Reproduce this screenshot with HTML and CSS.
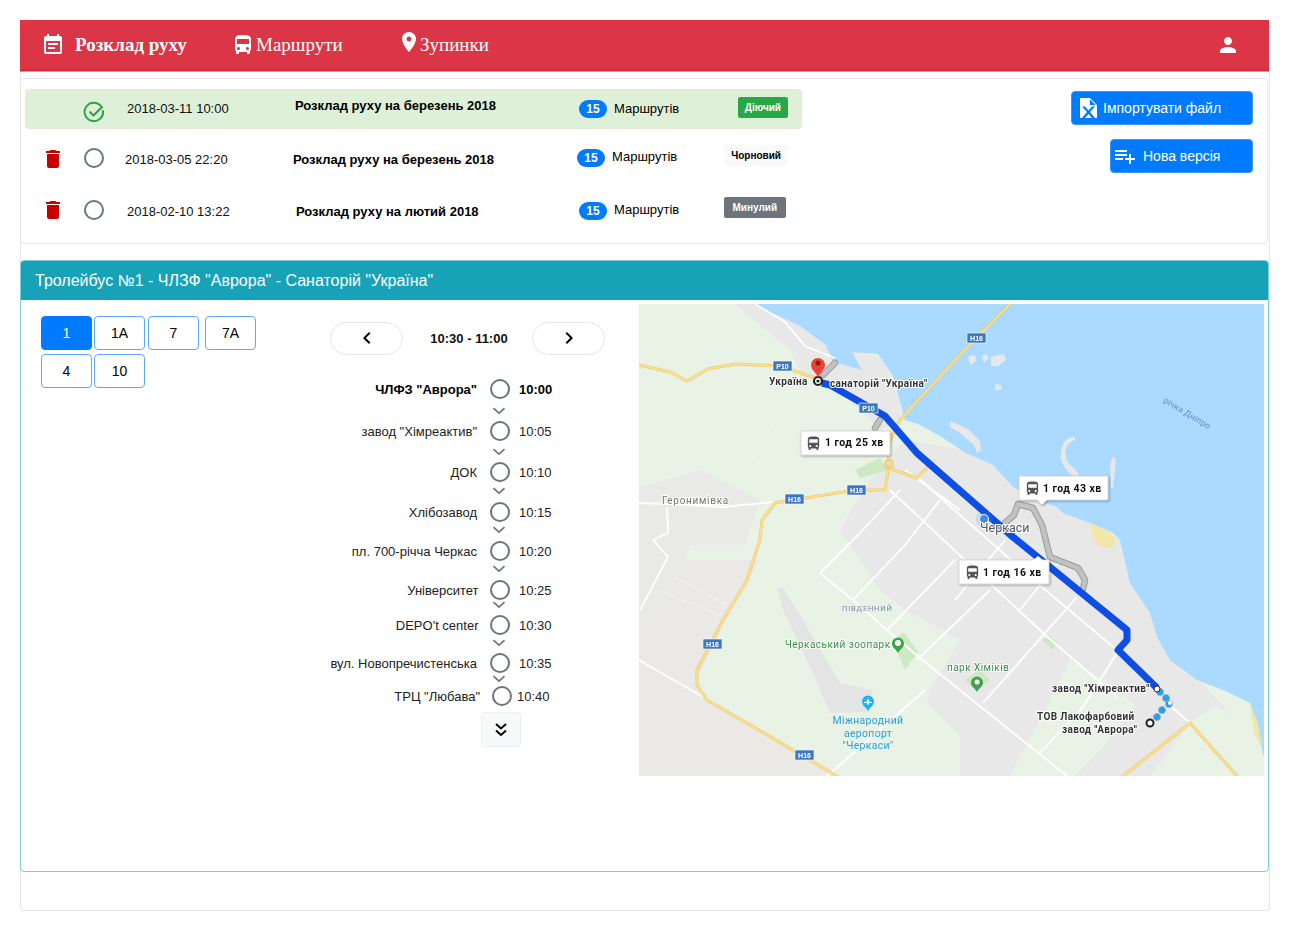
FILE: index.html
```html
<!DOCTYPE html>
<html lang="uk">
<head>
<meta charset="utf-8">
<title>Розклад руху</title>
<link rel="stylesheet" href="styles.css">
</head>
<body>
<svg class="defs" width="0" height="0" aria-hidden="true">
  <symbol id="i-event" viewBox="0 0 24 24"><path d="M17 10H7v2h10v-2zm2-7h-1V1h-2v2H8V1H6v2H5c-1.11 0-1.99.9-1.99 2L3 19c0 1.1.89 2 2 2h14c1.1 0 2-.9 2-2V5c0-1.1-.9-2-2-2zm0 16H5V8h14v11zm-5-5H7v2h7v-2z"/></symbol>
  <symbol id="i-bus" viewBox="0 0 24 24"><path d="M4 16c0 .88.39 1.67 1 2.22V20c0 .55.45 1 1 1h1c.55 0 1-.45 1-1v-1h8v1c0 .55.45 1 1 1h1c.55 0 1-.45 1-1v-1.78c.61-.55 1-1.34 1-2.22V6c0-3.5-3.58-4-8-4s-8 .5-8 4v10zm3.5 1c-.83 0-1.5-.67-1.5-1.5S6.67 14 7.5 14s1.5.67 1.5 1.5S8.33 17 7.5 17zm9 0c-.83 0-1.5-.67-1.5-1.5s.67-1.5 1.5-1.5 1.5.67 1.5 1.5-.67 1.5-1.5 1.5zm1.5-6H6V6h12v5z"/></symbol>
  <symbol id="i-place" viewBox="0 0 24 24"><path d="M12 2C8.13 2 5 5.13 5 9c0 5.25 7 13 7 13s7-7.75 7-13c0-3.87-3.13-7-7-7zm0 9.5c-1.38 0-2.5-1.12-2.5-2.5s1.12-2.5 2.5-2.5 2.5 1.12 2.5 2.5-1.12 2.5-2.5 2.5z"/></symbol>
  <symbol id="i-person" viewBox="0 0 24 24"><path d="M12 12c2.21 0 4-1.79 4-4s-1.79-4-4-4-4 1.79-4 4 1.79 4 4 4zm0 2c-2.67 0-8 1.34-8 4v2h16v-2c0-2.66-5.33-4-8-4z"/></symbol>
  <symbol id="i-delete" viewBox="0 0 24 24"><path d="M6 19c0 1.1.9 2 2 2h8c1.1 0 2-.9 2-2V7H6v12zM19 4h-3.5l-1-1h-5l-1 1H5v2h14V4z"/></symbol>
  <symbol id="i-radio" viewBox="0 0 24 24"><circle cx="12" cy="12" r="9" fill="none" stroke="currentColor" stroke-width="2"/></symbol>
  <symbol id="i-check" viewBox="0 0 24 24"><path d="M19.5 6.8A9.2 9.2 0 1 0 21 11" fill="none" stroke="currentColor" stroke-width="2" stroke-linecap="round"/><path d="M7.5 11.5l4 4 9-9" fill="none" stroke="currentColor" stroke-width="2"/></symbol>
  <symbol id="i-chev" viewBox="0 0 14 8"><path d="M1.500 1.200l5.500 5 5.500-5" fill="none" stroke="currentColor" stroke-width="1.700"/></symbol>
</svg>

<div class="page">
  <nav class="navbar">
    <a class="nav-item nav-active"><svg class="nav-icon"><use href="#i-event"/></svg><span>Розклад руху</span></a>
    <a class="nav-item nav-routes"><svg class="nav-icon"><use href="#i-bus"/></svg><span>Маршрути</span></a>
    <a class="nav-item nav-stops"><svg class="nav-icon pin"><use href="#i-place"/></svg><span>Зупинки</span></a>
    <svg class="nav-icon nav-user"><use href="#i-person"/></svg>
  </nav>

  <section class="versions">
    <div class="version-list">
      <div class="version v-active">
        <span class="c-del"></span>
        <svg class="c-state state-ok"><use href="#i-check"/></svg>
        <span class="c-date">2018-03-11 10:00</span>
        <strong class="c-title">Розклад руху на березень 2018</strong>
        <span class="c-count">15</span>
        <span class="c-unit">Маршрутів</span>
        <span class="c-status st-green">Діючий</span>
      </div>
      <div class="version v-draft">
        <svg class="c-del"><use href="#i-delete"/></svg>
        <svg class="c-state"><use href="#i-radio"/></svg>
        <span class="c-date">2018-03-05 22:20</span>
        <strong class="c-title">Розклад руху на березень 2018</strong>
        <span class="c-count">15</span>
        <span class="c-unit">Маршрутів</span>
        <span class="c-status st-light">Чорновий</span>
      </div>
      <div class="version v-past">
        <svg class="c-del"><use href="#i-delete"/></svg>
        <svg class="c-state"><use href="#i-radio"/></svg>
        <span class="c-date">2018-02-10 13:22</span>
        <strong class="c-title">Розклад руху на лютий 2018</strong>
        <span class="c-count">15</span>
        <span class="c-unit">Маршрутів</span>
        <span class="c-status st-grey">Минулий</span>
      </div>
    </div>
    <div class="actions">
      <button class="btn-primary btn-import">
        <svg class="btn-icon" viewBox="0 0 24 24"><path fill-rule="evenodd" d="M4 2h10l7 7v13H4zM14 3.500V9h5.500zM6 10.500h3l3.500 4 3.500-4h3l-5 5.500 5 6h-3l-3.500-4-3.500 4H6l5-6z"/></svg>
        <span>Імпортувати файл</span>
      </button>
      <button class="btn-primary btn-new">
        <svg class="btn-icon" viewBox="0 0 24 24"><path d="M14 10H2v2h12v-2zm0-4H2v2h12V6zm4 8v-4h-2v4h-4v2h4v4h2v-4h4v-2h-4zM2 16h8v-2H2v2z"/></svg>
        <span>Нова версія</span>
      </button>
    </div>
  </section>

  <section class="route-card">
    <header class="route-head">Тролейбус №1 - ЧЛЗФ "Аврора" - Санаторій "Україна"</header>
    <div class="route-body">
      <div class="route-picker">
        <button class="pick pick-on">1</button>
        <button class="pick">1A</button>
        <button class="pick pick-n7">7</button>
        <button class="pick pick-n7a">7A</button>
        <button class="pick">4</button>
        <button class="pick">10</button>
      </div>

      <div class="schedule">
        <div class="slot-bar">
          <button class="pill"><svg width="24" height="24" viewBox="0 0 24 24"><path d="M15.400 7.400L14 6l-6 6 6 6 1.400-1.400L10.800 12z"/></svg></button>
          <b class="slot">10:30 - 11:00</b>
          <button class="pill"><svg width="24" height="24" viewBox="0 0 24 24"><path d="M8.600 7.400L10 6l6 6-6 6-1.400-1.400L13.200 12z"/></svg></button>
        </div>
        <div class="stops">
          <div class="stop stop-main"><span class="s-name">ЧЛФЗ "Аврора"</span><svg class="s-dot"><use href="#i-radio"/></svg><span class="s-time">10:00</span></div>
          <div class="link d22 n20"><svg class="chev"><use href="#i-chev"/></svg></div>
          <div class="stop"><span class="s-name">завод "Хімреактив"</span><svg class="s-dot"><use href="#i-radio"/></svg><span class="s-time">10:05</span></div>
          <div class="link d21 n20"><svg class="chev"><use href="#i-chev"/></svg></div>
          <div class="stop"><span class="s-name">ДОК</span><svg class="s-dot"><use href="#i-radio"/></svg><span class="s-time">10:10</span></div>
          <div class="link d19 n21"><svg class="chev"><use href="#i-chev"/></svg></div>
          <div class="stop"><span class="s-name">Хлібозавод</span><svg class="s-dot"><use href="#i-radio"/></svg><span class="s-time">10:15</span></div>
          <div class="link d18 n21"><svg class="chev"><use href="#i-chev"/></svg></div>
          <div class="stop"><span class="s-name">пл. 700-річча Черкас</span><svg class="s-dot"><use href="#i-radio"/></svg><span class="s-time">10:20</span></div>
          <div class="link d18 n21"><svg class="chev"><use href="#i-chev"/></svg></div>
          <div class="stop stop-wide"><span class="s-name">Університет</span><svg class="s-dot"><use href="#i-radio"/></svg><span class="s-time">10:25</span></div>
          <div class="link d15 n20"><svg class="chev"><use href="#i-chev"/></svg></div>
          <div class="stop stop-wide"><span class="s-name">DEPO't center</span><svg class="s-dot"><use href="#i-radio"/></svg><span class="s-time">10:30</span></div>
          <div class="link d18 n20"><svg class="chev"><use href="#i-chev"/></svg></div>
          <div class="stop"><span class="s-name">вул. Новопречистенська</span><svg class="s-dot"><use href="#i-radio"/></svg><span class="s-time">10:35</span></div>
          <div class="link d16 n17"><svg class="chev"><use href="#i-chev"/></svg></div>
          <div class="stop stop-last"><span class="s-name">ТРЦ "Любава"</span><svg class="s-dot"><use href="#i-radio"/></svg><span class="s-time">10:40</span></div>
        </div>
        <button class="more"><svg width="18" height="18" viewBox="0 0 18 18"><path d="M4 3l5 4.500L14 3M4 9.500l5 4.500 5-4.500" fill="none" stroke="#000" stroke-width="2"/></svg></button>
      </div>

      <svg class="map" viewBox="639 304 625 472" preserveAspectRatio="none">
        <defs>
          <filter id="soft" x="-5%" y="-5%" width="110%" height="110%"><feGaussianBlur stdDeviation="0.4"/></filter>
          <filter id="drop" x="-10%" y="-10%" width="125%" height="130%"><feDropShadow dx="1" dy="1" stdDeviation="1" flood-color="#000" flood-opacity=".35"/></filter>
        </defs>
        <g filter="url(#soft)">
          <rect x="639" y="304" width="625" height="472" fill="#e8f3e6"/>
          <!-- built-up land -->
          <path fill="#ebe9e5" d="M639 560L760 560 747 585 723 625 697 680 707 700 793 750 837 776 639 776z"/>
          <path fill="#e9e9e8" d="M639 488L700 470 760 500 745 545 690 545 672 600 639 640z"/>
          <path fill="#e8e8e8" d="M735 304L800 304 840 345 885 360 905 420 880 430 845 395 825 385 800 370 790 350z"/>
          <path fill="#e8e8e8" d="M870 480L905 440 990 455 1040 495 1120 540 1180 660 1264 750 1264 776 905 776 930 690 960 640 905 610 880 590 840 530z"/>
          <path fill="#e4e4e4" d="M777 588L783 588 803 620 840 683 873 690 870 712 830 713 813 673 783 610z"/>
          <path fill="#e8f3e6" d="M1070 660L1105 680 1135 705 1105 745 1075 776 1010 776 1040 720zM1150 776L1190 723 1215 705 1255 730 1264 757 1264 776zM880 776L905 735 925 700 960 735 960 776z"/>
          <path fill="#cfe8c4" d="M892 640L904 632 918 652 905 670zM965 680L975 690 990 680 980 670zM1042 640L1052 650 1058 643 1048 635zM855 470L880 458 888 470 860 478z"/>
          <!-- water -->
          <path fill="#aadaff" d="M753 304L800 326 826 345 833 362 862 370 852 352 878 354 893 376 905 420 918 424 940 436 964 452 993 465 1013 487 1037 500 1057 507 1063 513 1090 523 1113 533 1120 540 1130 583 1150 613 1157 637 1170 660 1197 680 1223 690 1250 703 1264 757 1264 304z"/>
          <path fill="#e8e8e8" d="M1066 440c5-4 11-4 9 0-8 3-12 10-8 20 3 7 9 8 12 15l-6 1c-8-6-14-16-12-24 1-5 2-9 5-12zM1112 458c4-2 4 4 3 12l-2 18-2 0c0-10-2-22 1-30zM968 356l7-1 1 6-6 4zM982 356l4-2 3 4-5 5zM991 357l13-3 2 6-8 6-7 0zM995 384l6 1 1 4-6 2zM950 421l18 8 12 12 1 9-4 3-3-8-14-12-10-6z"/>
          <path fill="#f3e7a8" d="M1090 523l18 8 9 9-4 8-12-1-9-10zM1250 703l8 20 4 25-8-15z"/>
          <!-- streets -->
          <g fill="none" stroke="#fff" stroke-width="1.800">
            <path d="M755 304l30 18 20 24 30 12"/>
            <path d="M820 573L853 600 887 630 920 658 1067 776M820 573L860 533M853 600L905 545M887 630L955 560M917 660L990 590M983 703L1077 597M827 776L925 690"/>
            <path d="M917 477L1037 583 1117 650M890 490L1043 633 1117 697M1040 753L1083 707 1117 653M1167 703L1190 723M885 430L889 464M905 470L960 510M860 533L900 490M940 500L905 545M1005 540L955 600M1060 560L1020 610"/>
            <path d="M639 503L690 505 723 507 773 502M667 507L668 533 653 540 668 557 640 610M639 660L703 697"/>
          </g>
          <g fill="none" stroke="#f2f6f0" stroke-width="1">
            <path d="M675 577l50 27-5 12-30-14M660 590l30 14M790 393L753 460"/>
          </g>
          <!-- yellow roads -->
          <g fill="none" stroke-linecap="round" stroke-linejoin="round">
            <path stroke="#eec96a" stroke-width="3" d="M639 365L670 372 687 381 708 369 735 364 780 366 815 378M1010 304L960 355 900 420 888 445 889 463 885 490 855 490 775 503 762 520 760 540 747 580 723 620 697 670 697 685 707 700 793 750 837 776M889 468L917 478 928 466M1123 776L1190 723 1237 776"/>
            <path stroke="#fde293" stroke-width="1.600" d="M639 365L670 372 687 381 708 369 735 364 780 366 815 378M1010 304L960 355 900 420 888 445 889 463 885 490 855 490 775 503 762 520 760 540 747 580 723 620 697 670 697 685 707 700 793 750 837 776M889 468L917 478 928 466M1123 776L1190 723 1237 776"/>
          </g>
          <circle cx="889" cy="464" r="4" fill="none" stroke="#f0cc70" stroke-width="2"/>
          <!-- grey alternatives -->
          <g fill="none" stroke-linecap="round" stroke-linejoin="round">
            <path stroke="#9a9a9a" stroke-width="6.500" d="M835 363L823 375M880 420L875 428M1005 523L1014 515 1018 504 1033 508 1042 525 1050 557 1078 568 1085 580 1083 589"/>
            <path stroke="#c2c2c2" stroke-width="4.500" d="M835 363L823 375M880 420L875 428M1005 523L1014 515 1018 504 1033 508 1042 525 1050 557 1078 568 1085 580 1083 589"/>
          </g>
          <!-- main route -->
          <path fill="none" stroke="#0b4fe4" stroke-width="7" stroke-linejoin="round" d="M822 383L830 385 885 416 917 453 1013 537 1127 630 1127 640 1118 650 1157 688"/>
          <g fill="#1aa3f5" stroke="#9aa7ad" stroke-width=".800"><circle cx="1160" cy="692" r="3.500"/><circle cx="1166" cy="698" r="3.500"/><circle cx="1169" cy="704" r="3.500"/><circle cx="1162" cy="710" r="3.500"/><circle cx="1157" cy="717" r="3.500"/></g>
          <circle cx="1157" cy="689" r="3" fill="#fff" stroke="#222" stroke-width="1"/>
          <circle cx="1170" cy="703" r="2" fill="#fff"/>
          <circle cx="1150" cy="723" r="3.500" fill="#fff" stroke="#222" stroke-width="2"/>
          <circle cx="818" cy="381" r="4" fill="#fff" stroke="#222" stroke-width="2.200"/>
          <circle cx="818" cy="381" r="1.600" fill="#222"/>
          <!-- pin -->
          <path fill="#ea4335" d="M818 378c-1-5-7-8-7-13a7 7 0 0 1 14 0c0 5-6 8-7 13z"/>
          <circle cx="818" cy="363" r="2.500" fill="#8e1c14"/>
          <!-- location dot -->
          <circle cx="984" cy="519" r="8" fill="#4285f4" opacity=".18"/>
          <circle cx="984" cy="519" r="4.500" fill="#4285f4" stroke="#fff"/>
          <!-- POI pins -->
          <path fill="#3fa24c" d="M898 653c-1-3-6-5-6-9.500a6 6 0 0 1 12 0c0 4.500-5 6.500-6 9.500z"/>
          <circle cx="898" cy="643" r="3" fill="#fff"/>
          <path fill="#3fa24c" d="M977 692c-1-3-6-5-6-9.500a6 6 0 0 1 12 0c0 4.500-5 6.500-6 9.500z"/>
          <circle cx="977" cy="682" r="2.500" fill="#fff"/>
          <path fill="#1cb4f0" d="M868 711c-1-3-6-5-6-9.500a6 6 0 0 1 12 0c0 4.500-5 6.500-6 9.500z"/>
          <path fill="#fff" d="M864 702l3-.5 1-3h.8l.2 3 3 .5v1l-3-.3-.2 2-1 0-.8-2-3 .3z"/>
          <!-- road shields -->
          <g fill="#3b78c4" stroke="#fff" stroke-width=".600">
            <rect x="773" y="361" width="19" height="10"/><rect x="859" y="403" width="19" height="10"/><rect x="967" y="333" width="19" height="10"/><rect x="785" y="494" width="19" height="10"/><rect x="847" y="485" width="19" height="10"/><rect x="703" y="639" width="19" height="10"/><rect x="795" y="750" width="19" height="10"/>
          </g>
          <g class="shield">
            <text x="782.500" y="369">P10</text><text x="868.500" y="411">P10</text><text x="976.500" y="341">H16</text><text x="794.500" y="502">H16</text><text x="856.500" y="493">H16</text><text x="712.500" y="647">H16</text><text x="804.500" y="758">H16</text>
          </g>
          <g class="lbl-strong">
            <text x="769" y="385">Україна</text>
            <text x="830" y="387">санаторій "Україна"</text>
            <text x="1052" y="692">завод "Хімреактив"</text>
            <text x="1037" y="720">ТОВ Лакофарбовий</text>
            <text x="1062" y="733">завод "Аврора"</text>
          </g>
          <text class="lbl-town" x="662" y="504">Геронимівка</text>
          <text class="lbl-city" x="980" y="532">Черкаси</text>
          <text class="lbl-area" x="842" y="611">ПІВДЕННИЙ</text>
          <text class="lbl-green" x="785" y="648">Черкаський зоопарк</text>
          <text class="lbl-green" x="947" y="671">парк Хіміків</text>
          <g class="lbl-air">
            <text x="868" y="724">Міжнародний</text>
            <text x="868" y="737">аеропорт</text>
            <text x="868" y="749">"Черкаси"</text>
          </g>
          <text class="lbl-river" transform="translate(1163 402) rotate(31)">річка Дніпро</text>
          <!-- callouts -->
          <g filter="url(#drop)" stroke="#cfcfcf" stroke-width=".800">
            <path fill="#fff" d="M801 431h89v24h-89z"/>
            <path fill="#fff" d="M1019 476h89v24h-61l-5 5-5-5h-18z"/>
            <path fill="#fff" d="M959 560h90v24h-90z"/>
            <path fill="#fff" stroke="none" d="M1032 561l6-5 6 5z"/>
          </g>
          <g fill="#555">
            <use href="#i-bus" x="805" y="435" width="17" height="17"/>
            <use href="#i-bus" x="1024" y="480" width="17" height="17"/>
            <use href="#i-bus" x="964" y="564" width="17" height="17"/>
          </g>
          <g class="lbl-time">
            <text x="825" y="446">1 год 25 хв</text>
            <text x="1043" y="492">1 год 43 хв</text>
            <text x="983" y="576">1 год 16 хв</text>
          </g>
        </g>
      </svg>
    </div>
  </section>
</div>
</body>
</html>
```
FILE: styles.css
```css
* { box-sizing: border-box; }
html, body { margin: 0; padding: 0; background: #fff; }
body { font-family: "Liberation Sans", Arial, sans-serif; font-size: 13px; color: #000; }
.defs { position: absolute; }
button { font-family: inherit; cursor: pointer; }

.page {
  width: 1250px;
  height: 891px;
  margin: 20px 0 0 20px;
  border: 1px solid #e6e6e6;
  border-top: 0;
  border-radius: 4px;
}

/* navbar */
.navbar {
  display: flex;
  align-items: center;
  height: 51px;
  width: 1249px;
  margin-left: -1px;
  padding-left: 21px;
  background: #dc3545;
  border-bottom: 2px solid #d22c3c;
  box-shadow: 0 1px 0 #ea8a94;
  color: #fff;
  font-family: "Liberation Serif", "Times New Roman", serif;
  font-size: 19px;
}
.nav-item { display: flex; align-items: center; }
.nav-icon { width: 24px; height: 24px; fill: #fff; flex: none; }
.nav-active { font-weight: bold; width: 190px; gap: 10px; }
.nav-routes { width: 166px; gap: 1px; }
.nav-stops { gap: 0; }
.nav-stops span { margin-left: -1px; }
.nav-stops .pin { margin-top: -6px; }
.nav-user { margin-left: auto; margin-right: 29px; }

/* versions */
.versions {
  display: flex;
  justify-content: space-between;
  height: 166px;
  width: 1248px;
  margin: 7px 0 0 -1px;
  padding: 10px 14px 0 4px;
  border: 1px solid #e6e6e6;
  border-radius: 4px;
}
.version-list { width: 777px; }
.version {
  display: grid;
  grid-template-columns: 59px 41px 168px 284px 35px 110px 1fr;
  align-items: start;
  --icon: 0px;
}
.v-active {
  height: 40px;
  background: #dff0d8;
  border-radius: 4px;
  --state: 11px; --text: 12px; --title: 9px; --count: 11px; --unit: 12px; --status: 8px;
  padding-left: 2px;
}
.v-draft {
  height: 50px;
  --icon: 18px; --state: 17px; --text: 23px; --title: 23px; --count: 20px; --unit: 20px; --status: 16px;
}
.v-past {
  height: 54px;
  --icon: 19px; --state: 19px; --text: 25px; --title: 25px; --count: 23px; --unit: 23px; --status: 18px;
  padding-left: 2px;
}
.c-del { width: 24px; height: 24px; margin: var(--icon) 0 0 16px; fill: #c70000; }
.v-past .c-del { margin-left: 14px; }
.c-state { width: 24px; height: 24px; margin: var(--state) 0 0 -2px; color: #6c757d; }
.state-ok { color: #28a745; }
.v-active .c-state, .v-past .c-state { margin-left: -4px; }
.c-date { line-height: 16px; margin-top: var(--text); color: #111; }
.c-title { line-height: 16px; margin-top: var(--title); white-space: nowrap; }
.v-past .c-title { margin-left: 1px; }
.c-count {
  width: 28px; height: 18px; line-height: 18px;
  margin-top: var(--count);
  background: #007bff; color: #fff; border-radius: 9px;
  font-size: 12px; font-weight: bold; text-align: center;
}
.c-unit { line-height: 16px; margin-top: var(--unit); }
.c-status {
  justify-self: end;
  height: 21px; line-height: 21px;
  margin: var(--status) 14px 0 0;
  padding: 0 7px;
  border-radius: 2px;
  font-size: 10px; font-weight: bold;
  white-space: nowrap;
}
.st-green { background: #28a745; color: #fff; }
.st-light { background: #f8f9fa; color: #000; }
.st-grey { background: #6c757d; color: #fff; margin-right: 18px; padding: 0 8.500px; }

.actions { display: flex; flex-direction: column; align-items: flex-end; gap: 14px; padding-top: 2px; }
.btn-primary {
  display: flex; align-items: center;
  height: 34px;
  background: #007bff; color: #fff;
  border: 1px solid #3d97f7; border-radius: 4px;
  font-size: 14px;
  padding: 0;
}
.btn-icon { width: 24px; height: 24px; fill: #fff; flex: none; }
.btn-import { width: 182px; padding-left: 4px; gap: 3px; }
.btn-new { width: 143px; padding-left: 2px; gap: 6px; }

/* route card */
.route-card {
  width: 1249px;
  height: 612px;
  margin: 16px 0 0 -1px;
  border: 1px solid #7dcfdc;
  border-radius: 4px;
  overflow: hidden;
}
.route-head {
  height: 39px; line-height: 40px;
  padding-left: 14px;
  background: #17a2b8; color: #fff;
  font-size: 16px;
  border-bottom: 1px solid #17a2b8;
}
.route-body { display: flex; padding: 4px 0 0 0; }
.route-picker {
  display: flex; flex-wrap: wrap; align-content: flex-start; gap: 4px 2px;
  width: 218px; margin: 12px 0 0 20px;
}
.pick {
  width: 51px; height: 34px;
  background: #fff; color: #000;
  border: 1px solid #5aa9fa; border-radius: 4px;
  font-size: 14px; padding: 0;
}
.pick-n7 { margin-left: 1px; }
.pick-n7a { margin-left: 4px; }
.pick-on { background: #007bff; color: #fff; border-color: #007bff; }
.schedule { width: 309px; margin-left: 71px; display: flex; flex-direction: column; }
.slot-bar {
  display: flex; align-items: center; justify-content: space-between;
  width: 275px; margin-top: 18px; height: 32px;
}
.pill {
  width: 73px; height: 33px; padding: 0;
  display: flex; align-items: center; justify-content: center;
  background: #fff; border: 1px solid #e6e6e6; border-radius: 17px;
}
.slot { font-size: 13px; color: #111; margin-left: 3px; }
.stops { margin-top: 23px; }
.stop {
  display: grid;
  grid-template-columns: 147px 20px 1fr;
  column-gap: 13px;
  align-items: center;
  height: 20px;
  color: #222;
}
.stop .s-time { margin-left: -4px; }
.s-name { text-align: right; white-space: nowrap; justify-self: end; }
.s-dot { width: 24px; height: 24px; margin-left: -2px; color: #6c757d; }
.stop-main { font-weight: bold; color: #000; }
.stop-wide .s-name { margin-right: -1.500px; }
.stop-last .s-name { margin-right: -3px; }
.stop-last .s-dot { margin-left: 0; }
.stop-last .s-time { margin-left: -6px; }
.chev { display: block; width: 14px; height: 8px; margin-left: 162px; color: #6c757d; }
.d22 { padding-top: 10px; } .d21 { padding-top: 9px; } .d19 { padding-top: 7px; }
.d18 { padding-top: 6px; } .d16 { padding-top: 4px; } .d15 { padding-top: 3px; }
.n20 { padding-bottom: 4px; } .n21 { padding-bottom: 5px; } .n17 { padding-bottom: 1px; }
.more {
  width: 40px; height: 35px; margin: 8px 0 0 151px; padding: 0;
  display: flex; align-items: center; justify-content: center;
  background: #f8f9fa; border: 1px solid #eceef0; border-radius: 4px;
}

/* map */
.map { width: 625px; height: 472px; flex: none; display: block; }
.shield text { font: bold 7px "Liberation Sans", sans-serif; fill: #fff; text-anchor: middle; }
.lbl-strong text { font: bold 10px Roboto, sans-serif; fill: #333; stroke: #fff; stroke-width: 2px; paint-order: stroke; letter-spacing: .35px; }
.lbl-town { font: 10px Roboto, sans-serif; fill: #777; letter-spacing: .7px; stroke: #fff; stroke-width: 2px; paint-order: stroke; }
.lbl-city { font: 12.500px Roboto, sans-serif; fill: #555; stroke: #fff; stroke-width: 2px; paint-order: stroke; }
.lbl-area { font: 7.500px Roboto, sans-serif; fill: #7d8aa5; letter-spacing: .8px; }
.lbl-green { font: 10px Roboto, sans-serif; fill: #3a8e48; letter-spacing: .45px; stroke: #fff; stroke-width: 1.500px; paint-order: stroke; }
.lbl-air text { font: 10.500px Roboto, sans-serif; fill: #2c9fd9; text-anchor: middle; letter-spacing: .3px; }
.lbl-river { font: 8.500px Roboto, sans-serif; fill: #5b8fd6; letter-spacing: .2px; }
.lbl-time text { font: bold 10.500px Roboto, sans-serif; fill: #111; letter-spacing: .45px; }
```
